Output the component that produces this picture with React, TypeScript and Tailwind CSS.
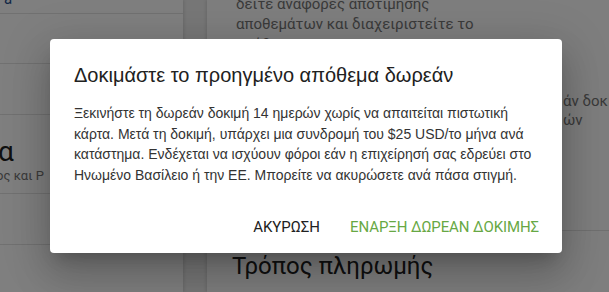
export default function App() {
  return (
    <div className="relative h-[292px] w-[609px] overflow-hidden bg-[#eeeeee] font-['Roboto',sans-serif]">
      {/* page behind the dialog */}
      <div className="flex h-full">
        <aside className="w-[183px] shrink-0 bg-white shadow-[1px_0_3px_rgba(0,0,0,0.12)]">
          <div className="h-[22px] border-b border-[#e3e3e3] leading-none">
            <span className="-mt-[8px] block pl-1 text-[15px] text-[#1f4e8c]">a</span>
          </div>
          <div className="h-[50px] border-b border-[#e3e3e3]" />
          <div className="h-[51px] border-b border-[#e3e3e3]" />
          <div className="h-[79px] border-b border-[#e3e3e3] pt-[22px]">
            <p className="-ml-[2px] text-[28px] leading-[30px] text-[#212121]">α</p>
            <p className="-ml-[4px] mt-[1px] text-[13px] leading-[16px] text-[#757575]">ος και P</p>
          </div>
          <div className="h-[51px] border-b border-[#e3e3e3]" />
        </aside>

        <div className="w-[24px] shrink-0" />

        <main className="flex-1 bg-[#fcfcfc] shadow-[-1px_0_3px_rgba(0,0,0,0.12)]">
          <div className="flex h-[231px] border-b border-[#e0e0e0]">
            <div className="w-[329px] shrink-0 pl-[29px] text-[15px] leading-[19px] text-[#757575]">
              <p className="-mt-[5px]">δείτε αναφορές αποτίμησης</p>
              <p className="mt-px">αποθεμάτων και διαχειριστείτε το</p>
              <p className="mt-px">απόθεμα.</p>
            </div>
            <div className="pt-[92px] pl-[27px] text-[15px] leading-[19px] whitespace-nowrap text-[#757575]">
              <p>άν δοκιμ</p>
              <p>ών</p>
            </div>
          </div>
          <h2 className="pl-[25px] pt-[21px] text-[24px] leading-[28px] text-[#212121]">Τρόπος πληρωμής</h2>
        </main>
      </div>

      {/* scrim */}
      <div className="absolute inset-0 bg-black/50" />

      {/* dialog */}
      <div className="absolute left-[50px] top-[39px] flex h-[214px] w-[512px] flex-col rounded-[4px] bg-white px-[24px] pt-[24px] shadow-[0_11px_15px_-7px_rgba(0,0,0,0.2),0_24px_38px_3px_rgba(0,0,0,0.14),0_9px_46px_8px_rgba(0,0,0,0.12)]">
        <h1 className="font-['Liberation_Sans',Arial,sans-serif] text-[20px] leading-[24px] text-[#212121]">
          Δοκιμάστε το προηγμένο απόθεμα δωρεάν
        </h1>
        <p className="mt-[16px] font-['Liberation_Sans',Arial,sans-serif] text-[14px] leading-[20.5px] text-[#333333]">
          Ξεκινήστε τη δωρεάν δοκιμή 14 ημερών χωρίς να απαιτείται πιστωτική κάρτα. Μετά τη δοκιμή, υπάρχει μια συνδρομή του $25 USD/το μήνα ανά κατάστημα. Ενδέχεται να ισχύουν φόροι εάν η επιχείρησή σας εδρεύει στο Ηνωμένο Βασίλειο ή την ΕΕ. Μπορείτε να ακυρώσετε ανά πάσα στιγμή.
        </p>
        <div className="mt-auto mb-[8px] -mr-[9px] flex justify-end gap-[14px]">
          <button className="h-[36px] px-[8px] text-[15px] text-[#212121]">ΑΚΥΡΩΣΗ</button>
          <button className="h-[36px] px-[8px] text-[15px] tracking-[-0.1px] text-[#67a844]">ΕΝΑΡΞΗ ΔΩΡΕΑΝ ΔΟΚΙΜΗΣ</button>
        </div>
      </div>
    </div>
  );
}
